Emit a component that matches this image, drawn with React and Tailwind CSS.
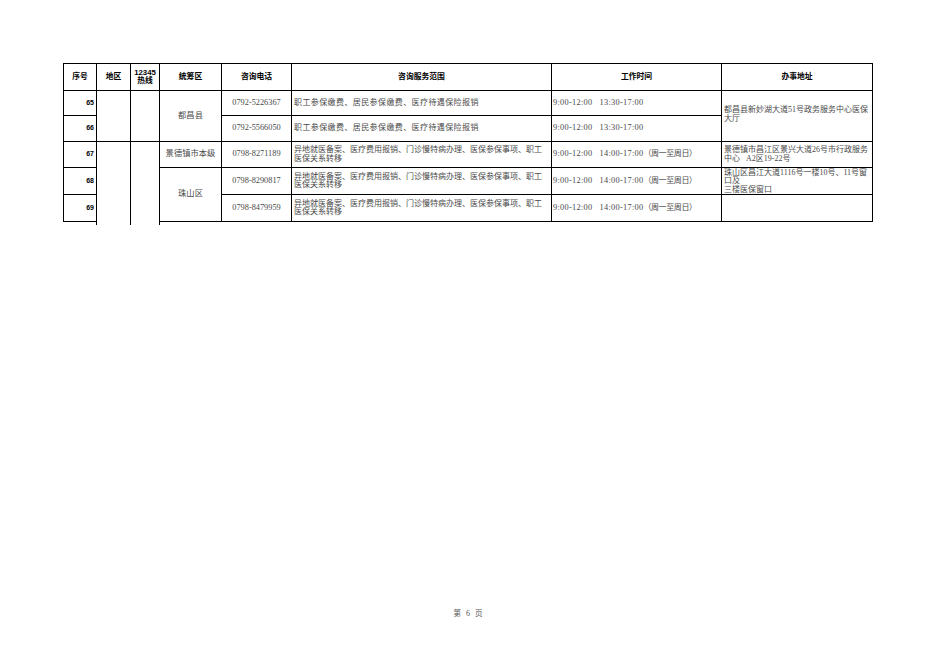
const rows = [
  {
    no: '65',
    phone: '0792-5226367',
    scope: ['职工参保缴费、居民参保缴费、医疗待遇保险报销'],
    wide: true,
    time: '9:00-12:00   13:30-17:00',
    week: '',
  },
  {
    no: '66',
    phone: '0792-5566050',
    scope: ['职工参保缴费、居民参保缴费、医疗待遇保险报销'],
    wide: true,
    time: '9:00-12:00   13:30-17:00',
    week: '',
  },
  {
    no: '67',
    phone: '0798-8271189',
    scope: ['异地就医备案、医疗费用报销、门诊慢特病办理、医保参保事项、职工', '医保关系转移'],
    time: '9:00-12:00   14:00-17:00',
    week: '（周一至周日）',
  },
  {
    no: '68',
    phone: '0798-8290817',
    scope: ['异地就医备案、医疗费用报销、门诊慢特病办理、医保参保事项、职工', '医保关系转移'],
    time: '9:00-12:00   14:00-17:00',
    week: '（周一至周日）',
  },
  {
    no: '69',
    phone: '0798-8479959',
    scope: ['异地就医备案、医疗费用报销、门诊慢特病办理、医保参保事项、职工', '医保关系转移'],
    time: '9:00-12:00   14:00-17:00',
    week: '（周一至周日）',
  },
];

function Lines({ lines }) {
  return lines.map((l, i) => (
    <div key={i} className="whitespace-pre">{l}</div>
  ));
}

function NoCell({ no }) {
  return (
    <td className="border border-black text-right pr-[2px] align-middle font-['Liberation_Sans','Noto_Sans_CJK_SC',sans-serif] text-[7px] font-bold text-black">
      {no}
    </td>
  );
}

function PhoneCell({ phone }) {
  return <td className="border border-black text-center align-middle text-[8.3px]">{phone}</td>;
}

function ScopeCell({ scope, wide }) {
  return (
    <td className={wide ? 'border border-black pl-[2px] align-middle tracking-[0.4px]' : 'border border-black pl-[2px] align-middle'}>
      <Lines lines={scope} />
    </td>
  );
}

function TimeCell({ time, week }) {
  return (
    <td className="border border-black pl-[1px] align-middle whitespace-pre">
      <span className="text-[8.3px] tracking-[0.3px]">{time}</span>
      {week && <span className="tracking-[-0.4px]">{week}</span>}
    </td>
  );
}

export default function App() {
  const [r65, r66, r67, r68, r69] = rows;

  return (
    <div className="w-[936px] h-[662px] bg-white flex flex-col overflow-hidden">
      <table className="ml-[63px] mt-[63px] w-[809px] table-fixed border-collapse font-['Liberation_Serif','Noto_Sans_CJK_SC',serif] text-[8px] leading-[8.4px] text-[#4a4a4a]">
        <colgroup>
          <col className="w-[33px]" />
          <col className="w-[34px]" />
          <col className="w-[29px]" />
          <col className="w-[62px]" />
          <col className="w-[70px]" />
          <col className="w-[260px]" />
          <col className="w-[170px]" />
          <col className="w-[151px]" />
        </colgroup>
        <thead>
          <tr className="h-[27px] font-['Liberation_Sans','Noto_Sans_CJK_SC',sans-serif] text-[7.8px] font-bold text-black">
            <th className="border border-black">序号</th>
            <th className="border border-black">地区</th>
            <th className="border border-black leading-[8px]">
              <div>12345</div>
              <div>热线</div>
            </th>
            <th className="border border-black">统筹区</th>
            <th className="border border-black">咨询电话</th>
            <th className="border border-black">咨询服务范围</th>
            <th className="border border-black">工作时间</th>
            <th className="border border-black">办事地址</th>
          </tr>
        </thead>
        <tbody>
          <tr className="h-[25px]">
            <NoCell no={r65.no} />
            <td rowSpan={2} className="border border-black" />
            <td rowSpan={2} className="border border-black" />
            <td rowSpan={2} className="border border-black text-center align-middle text-[8.3px]">都昌县</td>
            <PhoneCell phone={r65.phone} />
            <ScopeCell scope={r65.scope} wide={r65.wide} />
            <TimeCell time={r65.time} week={r65.week} />
            <td rowSpan={2} className="border border-black pl-[2px] align-middle pb-[3px]">
              <Lines lines={['都昌县新妙湖大道51号政务服务中心医保', '大厅']} />
            </td>
          </tr>
          <tr className="h-[26px]">
            <NoCell no={r66.no} />
            <PhoneCell phone={r66.phone} />
            <ScopeCell scope={r66.scope} wide={r66.wide} />
            <TimeCell time={r66.time} week={r66.week} />
          </tr>
          <tr className="h-[26px]">
            <NoCell no={r67.no} />
            <td rowSpan={3} className="border border-black border-b-0" />
            <td rowSpan={3} className="border border-black border-b-0" />
            <td className="border border-black text-center align-middle text-[8.3px]">景德镇市本级</td>
            <PhoneCell phone={r67.phone} />
            <ScopeCell scope={r67.scope} />
            <TimeCell time={r67.time} week={r67.week} />
            <td className="border border-black pl-[2px] align-middle">
              <Lines lines={['景德镇市昌江区景兴大道26号市行政服务', '中心   A2区19-22号']} />
            </td>
          </tr>
          <tr className="h-[27px]">
            <NoCell no={r68.no} />
            <td rowSpan={2} className="border border-black text-center align-middle text-[8.3px]">珠山区</td>
            <PhoneCell phone={r68.phone} />
            <ScopeCell scope={r68.scope} />
            <TimeCell time={r68.time} week={r68.week} />
            <td className="border border-black pl-[2px] align-top p-0">
              <div className="h-[26px] overflow-hidden pt-[1px]">
                <Lines lines={['珠山区昌江大道1116号一楼10号、11号窗', '口及', '三楼医保窗口']} />
              </div>
            </td>
          </tr>
          <tr className="h-[27px]">
            <NoCell no={r69.no} />
            <PhoneCell phone={r69.phone} />
            <ScopeCell scope={r69.scope} />
            <TimeCell time={r69.time} week={r69.week} />
            <td className="border border-black" />
          </tr>
          <tr className="h-[3px]">
            <td className="p-0" />
            <td className="p-0 border-x border-black" />
            <td className="p-0 border-r border-black" />
            <td className="p-0" colSpan={5} />
          </tr>
        </tbody>
      </table>

      <div className="flex-1" />

      <footer className="mb-[42px] flex justify-center items-baseline gap-[5px] font-['Liberation_Serif','Noto_Sans_CJK_SC',serif] text-[7.5px] text-[#555]">
        <span>第</span>
        <span className="text-[8px]">6</span>
        <span>页</span>
      </footer>
    </div>
  );
}
